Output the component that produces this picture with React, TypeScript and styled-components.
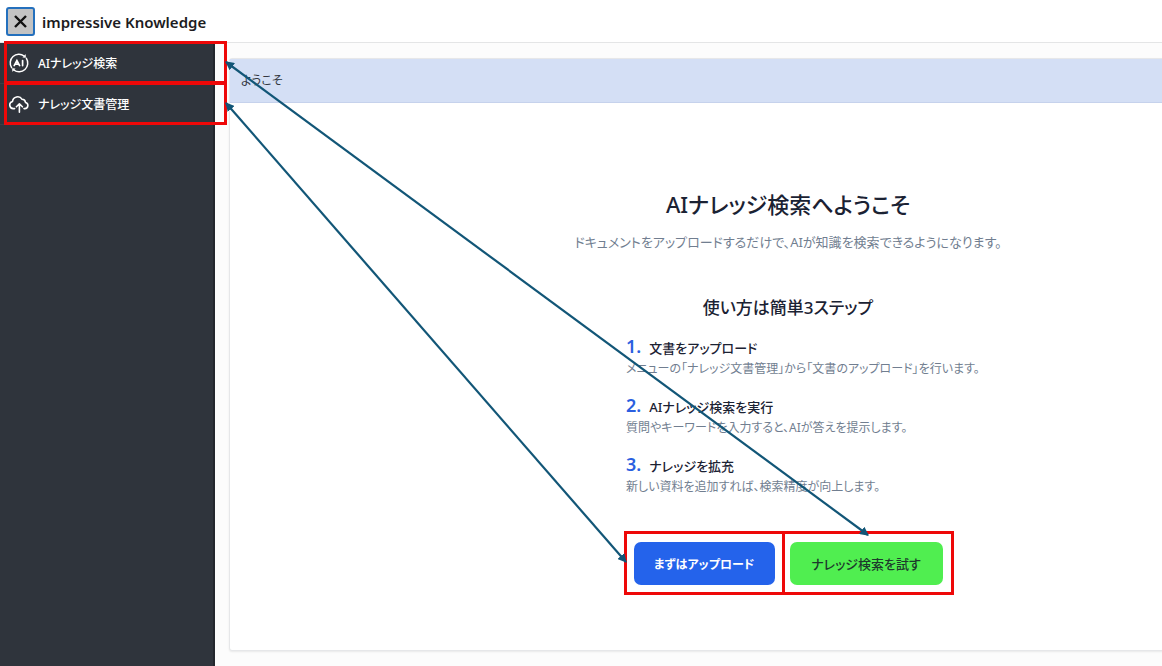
import React from "react";
import styled, { createGlobalStyle } from "styled-components";

const GlobalStyle = createGlobalStyle`
  *, *::before, *::after { box-sizing: border-box; }
  body {
    margin: 0;
    background: #fcfcfc;
    color: #1b2233;
    font-family: "Noto Sans", "Noto Sans CJK JP", sans-serif;
    font-feature-settings: "palt";
    font-size: 13px;
  }
  h1, h2, h3, p, ol, ul { margin: 0; padding: 0; }
  ol, ul { list-style: none; }
`;

const Shell = styled.div`
  position: relative;
  display: flex;
  flex-direction: column;
  min-height: 100vh;
  overflow: hidden;
`;

const TopBar = styled.header`
  display: flex;
  align-items: center;
  gap: 7px;
  height: 43px;
  padding: 1px 6px 0;
  background: #fff;
  border-bottom: 1px solid #e4e5e6;
`;

const CloseButton = styled.button`
  display: grid;
  place-items: center;
  width: 29px;
  height: 29px;
  padding: 0;
  color: #111;
  background: #c3c3c3;
  border: 2px solid #2470bd;
  border-radius: 3px;
`;

const Brand = styled.h1`
  font-size: 15px;
  line-height: 24px;
  font-weight: 600;
  color: #1c1c1e;
`;

const Body = styled.div`
  display: flex;
  flex: 1;
`;

const Sidebar = styled.nav`
  flex: 0 0 215px;
  background: #2f343c;
  border-right: 2px solid #23272d;
`;

const NavItem = styled.li`
  border-bottom: 1px solid #3b4048;
`;

const NavLink = styled.a`
  display: flex;
  align-items: center;
  gap: 9px;
  height: 40px;
  padding: 0 9px 1px;
  color: #fff;
  font-size: 12px;
  font-weight: 500;
  text-decoration: none;
`;

const Main = styled.main`
  flex: 1 0 1132px;
  display: flex;
  padding: 15px 0 15px 14px;
`;

const Card = styled.section`
  flex: 1;
  background: #fff;
  border: 1px solid #e6e7e9;
  border-radius: 3px;
  box-shadow: 0 1px 2px rgba(0, 0, 0, 0.08);
`;

const CardHeader = styled.div`
  height: 44px;
  padding: 0 11px;
  font-size: 12px;
  line-height: 44px;
  color: #333842;
  background: #d4dff5;
  border-bottom: 1px solid #c6d2ec;
`;

const Welcome = styled.div`
  display: flex;
  flex-direction: column;
  align-items: center;
  padding: 85px 0 65px;
`;

const Title = styled.h2`
  font-size: 22px;
  line-height: 32px;
  font-weight: 500;
`;

const Lead = styled.p`
  margin-top: 12px;
  font-size: 13px;
  line-height: 20px;
  color: #717e90;
`;

const Subtitle = styled.h3`
  margin-top: 44px;
  font-size: 17px;
  line-height: 24px;
  font-weight: 500;
`;

const Steps = styled.ol`
  display: flex;
  flex-direction: column;
  gap: 15px;
  width: 324px;
  margin-top: 14px;
`;

const StepTitle = styled.div`
  display: flex;
  align-items: baseline;
  gap: 8px;
  height: 24px;
  line-height: 24px;
  font-weight: 500;
`;

const StepNumber = styled.span`
  font-size: 18px;
  font-weight: 600;
  color: #2b5fe0;
`;

const StepText = styled.p`
  margin-top: 2px;
  font-size: 12px;
  line-height: 18px;
  color: #717e90;
  white-space: nowrap;
`;

const Actions = styled.div`
  display: flex;
  gap: 15px;
  margin-top: 46px;
`;

const ActionButton = styled.button<{ $tone: "primary" | "success" }>`
  height: 43px;
  width: ${(p) => (p.$tone === "primary" ? 141 : 153)}px;
  padding: 0;
  border: 0;
  border-radius: 7px;
  font: inherit;
  font-feature-settings: inherit;
  font-size: ${(p) => (p.$tone === "primary" ? 12 : 13)}px;
  font-weight: ${(p) => (p.$tone === "primary" ? 700 : 500)};
  color: ${(p) => (p.$tone === "primary" ? "#fff" : "#1d3a2c")};
  background: ${(p) => (p.$tone === "primary" ? "#2463eb" : "#50ee50")};
`;

const Annotations = styled.svg`
  position: absolute;
  top: 0;
  left: 0;
  pointer-events: none;
`;

const AiIcon = () => (
  <svg width="20" height="20" viewBox="0 0 20 20" fill="none" stroke="#fff" strokeWidth="1.5" strokeLinecap="round" aria-hidden="true">
    <path d="M2.6 14.6A8.7 8.7 0 0 1 15.2 3" />
    <path d="M17.4 5.4A8.7 8.7 0 0 1 4.8 17" />
    <path d="M14.2 4.2 16.6 4.4 16.4 2zM5.8 15.8 3.4 15.6 3.6 18z" fill="#fff" strokeWidth="0.6" />
    <path d="M5.2 12.6 7.9 7.5l2.7 5.1M6.3 11.2h3.2M13.6 7.5v5.1" strokeWidth="1.7" />
  </svg>
);

const UploadIcon = () => (
  <svg width="20" height="20" viewBox="0 0 20 20" fill="none" stroke="#fff" strokeWidth="1.6" strokeLinecap="round" strokeLinejoin="round" aria-hidden="true">
    <path d="M5.6 14.6H4.4a3.6 3.6 0 0 1-.9-7.1 5.2 5.2 0 0 1 9.6-2.2 3.6 3.6 0 0 1 3.4 3.2 3.1 3.1 0 0 1-.7 6.1h-.8" />
    <path d="M10.4 18.2V10.2M7.4 12.8l3-3 3 3" />
  </svg>
);

const steps = [
  { title: "文書をアップロード", text: "メニューの「ナレッジ文書管理」から「文書のアップロード」を行います。" },
  { title: "AIナレッジ検索を実行", text: "質問やキーワードを入力すると、AIが答えを提示します。" },
  { title: "ナレッジを拡充", text: "新しい資料を追加すれば、検索精度が向上します。" },
];

export default function App() {
  return (
    <Shell>
      <GlobalStyle />
      <TopBar>
        <CloseButton aria-label="メニューを閉じる">
          <svg width="13" height="13" viewBox="0 0 13 13" stroke="currentColor" strokeWidth="2.4" aria-hidden="true">
            <path d="M1 1l11 11M12 1L1 12" />
          </svg>
        </CloseButton>
        <Brand>impressive Knowledge</Brand>
      </TopBar>
      <Body>
        <Sidebar>
          <ul>
            <NavItem><NavLink href="#search"><AiIcon />AIナレッジ検索</NavLink></NavItem>
            <NavItem><NavLink href="#documents"><UploadIcon />ナレッジ文書管理</NavLink></NavItem>
          </ul>
        </Sidebar>
        <Main>
          <Card>
            <CardHeader>ようこそ</CardHeader>
            <Welcome>
              <Title>AIナレッジ検索へようこそ</Title>
              <Lead>ドキュメントをアップロードするだけで、AIが知識を検索できるようになります。</Lead>
              <Subtitle>使い方は簡単3ステップ</Subtitle>
              <Steps>
                {steps.map((step, i) => (
                  <li key={step.title}>
                    <StepTitle><StepNumber>{i + 1}.</StepNumber>{step.title}</StepTitle>
                    <StepText>{step.text}</StepText>
                  </li>
                ))}
              </Steps>
              <Actions>
                <ActionButton $tone="primary">まずはアップロード</ActionButton>
                <ActionButton $tone="success">ナレッジ検索を試す</ActionButton>
              </Actions>
            </Welcome>
          </Card>
        </Main>
      </Body>
      <Annotations width="1162" height="666" viewBox="0 0 1162 666" fill="none" aria-hidden="true">
        <defs>
          <marker id="head" viewBox="0 0 8 8" refX="7" refY="4" markerWidth="9" markerHeight="9" markerUnits="userSpaceOnUse" orient="auto-start-reverse">
            <path d="M0 0l8 4-8 4z" fill="#125677" />
          </marker>
        </defs>
        <g stroke="#ee0808" strokeWidth="3">
          <rect x="5.5" y="42.5" width="220" height="40" />
          <rect x="5.5" y="83.5" width="220" height="40" />
          <rect x="625.5" y="532.5" width="158" height="61" />
          <rect x="783.5" y="532.5" width="169" height="61" />
        </g>
        <g stroke="#125677" strokeWidth="2.2">
          <path d="M226 62L868 535" markerStart="url(#head)" markerEnd="url(#head)" />
          <path d="M226 103L626 562" markerStart="url(#head)" markerEnd="url(#head)" />
        </g>
      </Annotations>
    </Shell>
  );
}
